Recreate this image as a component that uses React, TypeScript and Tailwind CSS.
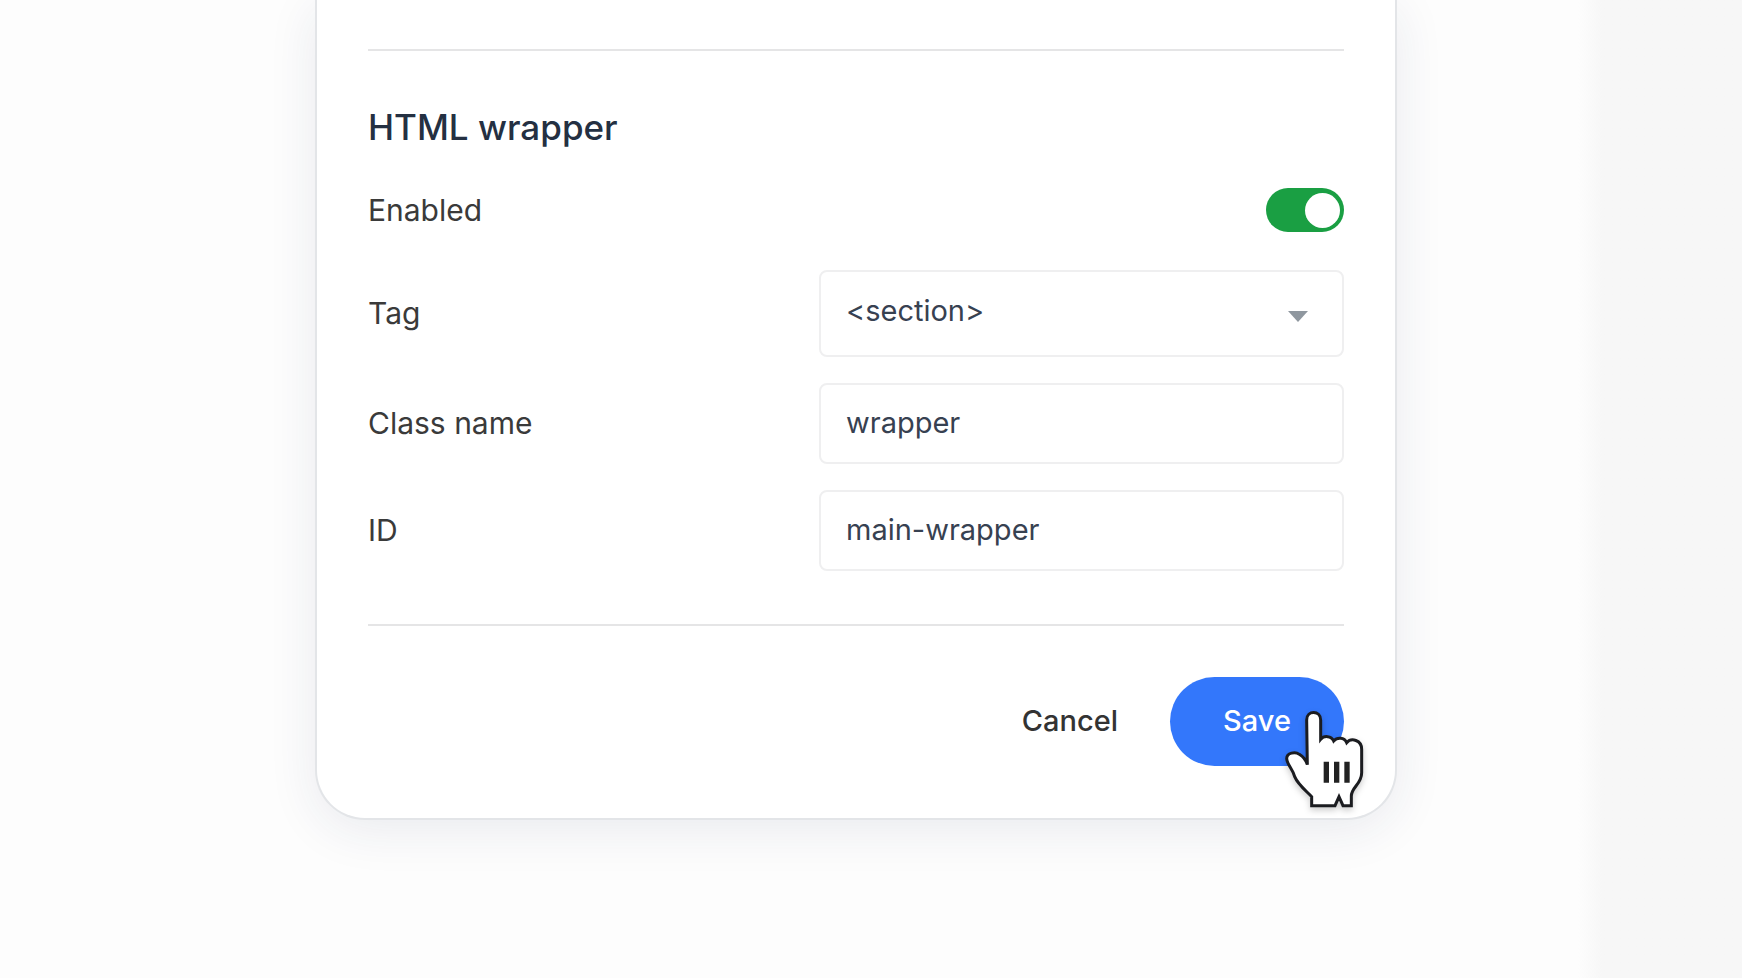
import { useState } from "react";

const TAGS = ["section", "div", "article", "main", "aside"];

const fieldClass =
  "w-full rounded-lg border-2 border-[#efeff0] bg-white px-[25px] text-[29px] text-[#374151] outline-none";

function HandCursor() {
  return (
    <svg
      viewBox="426 144 255 306"
      width={85}
      height={102}
      className="pointer-events-none absolute top-[31px] left-[112px] overflow-visible drop-shadow-[0_3px_3px_rgba(0,0,0,0.2)]"
      aria-hidden="true"
    >
      <path
        d="M502 314 L500 180 C500 150 542 150 542 180 V238 C552 226 574 227 581 243 C592 231 613 232 620 248 C634 232 665 240 665 268 V338 C665 372 634 382 634 408 V437 H609 L597 410 L585 437 H515 V410 C498 392 474 374 464 350 C459 328 442 316 440 296 C440 278 466 274 478 283 C488 289 497 298 502 314 Z"
        fill="#fff"
        stroke="#1b1c20"
        strokeWidth={9}
      />
      <path d="M559 305V368M590 305V368M621 305V368" stroke="#222" strokeWidth={16} />
    </svg>
  );
}

function Field({ id, label, children }) {
  return (
    <div className="grid grid-cols-[451px_1fr] items-center">
      <label htmlFor={id} className="text-[30px] text-[#3a3a3a]">
        {label}
      </label>
      {children}
    </div>
  );
}

export default function App() {
  const [enabled, setEnabled] = useState(true);
  const [tag, setTag] = useState("section");
  const [className, setClassName] = useState("wrapper");
  const [elementId, setElementId] = useState("main-wrapper");

  return (
    <div className="flex min-h-screen bg-[#fdfdfd] font-['Inter',sans-serif]">
      <main className="min-w-0 flex-1 pr-[181px] pb-[158px] pl-[315px]">
        <form
          className="rounded-b-[50px] border-2 border-t-0 border-[#e3e5e8] bg-white px-[51px] pt-[49px] pb-[52px] shadow-[0_10px_50px_rgba(30,40,90,0.09)]"
          onSubmit={(e) => e.preventDefault()}
        >
          <section className="border-y-2 border-[#e5e5e6] pt-14 pb-[53px]">
            <h2 className="mb-[41px] text-[35px] leading-10 font-medium text-[#243042]">
              HTML wrapper
            </h2>
            <div className="mb-[38px] flex h-11 items-center justify-between">
              <label htmlFor="enabled" className="text-[30px] text-[#3a3a3a]">
                Enabled
              </label>
              <input
                id="enabled"
                type="checkbox"
                role="switch"
                checked={enabled}
                onChange={(e) => setEnabled(e.target.checked)}
                className="flex h-11 w-[78px] cursor-pointer appearance-none items-center rounded-full bg-gray-300 px-1 before:size-[35px] before:rounded-full before:bg-white checked:justify-end checked:bg-[#1a9f43]"
              />
            </div>
            <div className="flex flex-col gap-[26px]">
              <Field id="tag" label="Tag">
                <div className="relative">
                  <select
                    id="tag"
                    value={tag}
                    onChange={(e) => setTag(e.target.value)}
                    className={`${fieldClass} h-[87px] appearance-none pb-1.5`}
                  >
                    {TAGS.map((name) => (
                      <option key={name} value={name}>
                        {`<${name}>`}
                      </option>
                    ))}
                  </select>
                  <svg
                    viewBox="0 0 20 11"
                    className="pointer-events-none absolute top-[41px] right-9 h-[11px] w-5"
                    aria-hidden="true"
                  >
                    <path d="M0 0H20L10 11Z" fill="#8f979f" />
                  </svg>
                </div>
              </Field>
              <Field id="class-name" label="Class name">
                <input
                  id="class-name"
                  type="text"
                  value={className}
                  onChange={(e) => setClassName(e.target.value)}
                  className={`${fieldClass} h-[81px] pb-0.5`}
                />
              </Field>
              <Field id="element-id" label="ID">
                <input
                  id="element-id"
                  type="text"
                  value={elementId}
                  onChange={(e) => setElementId(e.target.value)}
                  className={`${fieldClass} h-[81px] pb-0.5`}
                />
              </Field>
            </div>
          </section>
          <div className="flex items-center justify-end gap-[52px] pt-[51px]">
            <button type="button" className="pb-0.5 text-[29px] font-medium text-[#333]">
              Cancel
            </button>
            <div className="relative">
              <button
                type="submit"
                className="h-[89px] w-[174px] rounded-full bg-[#3377fb] pb-0.5 text-[29px] font-medium text-white"
              >
                Save
              </button>
              <HandCursor />
            </div>
          </div>
        </form>
      </main>
      <aside className="w-[164px] bg-linear-to-r from-[#fdfdfd] to-[#f7f7f7] to-[24px]" />
    </div>
  );
}
